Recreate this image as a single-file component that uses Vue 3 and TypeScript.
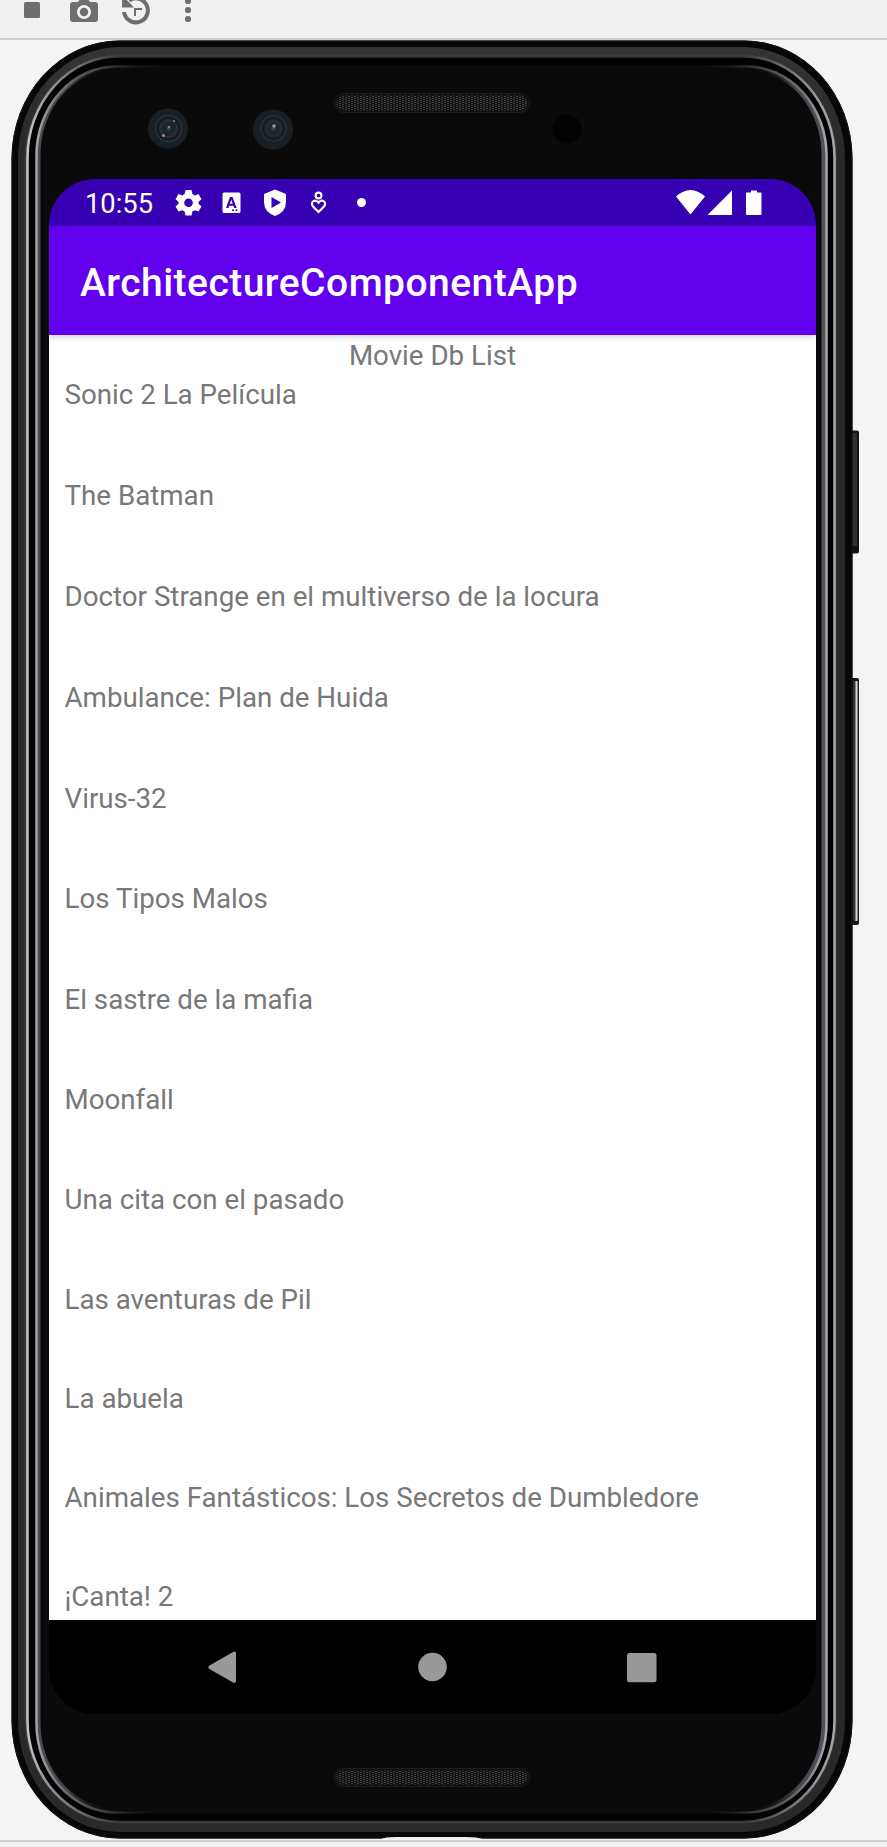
<script setup lang="ts">
interface Movie {
  title: string
  height: number
}

const movies: Movie[] = [
  { title: 'Sonic 2 La Película', height: 101.2 },
  { title: 'The Batman', height: 101.4 },
  { title: 'Doctor Strange en el multiverso de la locura', height: 101.1 },
  { title: 'Ambulance: Plan de Huida', height: 100.7 },
  { title: 'Virus-32', height: 100.6 },
  { title: 'Los Tipos Malos', height: 100.2 },
  { title: 'El sastre de la mafia', height: 100.2 },
  { title: 'Moonfall', height: 99.9 },
  { title: 'Una cita con el pasado', height: 99.8 },
  { title: 'Las aventuras de Pil', height: 99.4 },
  { title: 'La abuela', height: 99.2 },
  { title: 'Animales Fantásticos: Los Secretos de Dumbledore', height: 99 },
  { title: '¡Canta! 2', height: 40 },
]
</script>

<template>
  <div class="window">
    <header class="toolbar">
      <svg width="220" height="38" viewBox="0 0 220 38" fill="#6e6e6e">
        <rect x="24" y="2" width="16" height="16" rx="1.5" />
        <path fill-rule="evenodd" d="M73 2h5l3-4h6l3 4h5q3 0 3 3v14q0 3-3 3H73q-3 0-3-3V5q0-3 3-3zM84 5a7 7 0 1 0 0 14a7 7 0 1 0 0-14z" />
        <circle cx="84" cy="12" r="4.2" />
        <path d="M124 12A12 12 0 1 0 129 .5" fill="none" stroke="#6e6e6e" stroke-width="4" />
        <path d="M122-5l12 12.500H122zM134 8h8v2h-6v6h-2z" />
        <circle cx="188" cy="1" r="3.100" /><circle cx="188" cy="10" r="3.100" /><circle cx="188" cy="19" r="3.100" />
      </svg>
    </header>

    <main class="stage">
      <svg class="shell" width="887" height="1807" viewBox="0 40 887 1807">
        <defs>
          <linearGradient id="band" x1="0" y1="0" x2="0" y2="1">
            <stop offset="0" stop-color="#343434" /><stop offset=".06" stop-color="#292929" /><stop offset="1" stop-color="#292929" />
          </linearGradient>
          <linearGradient id="rim" gradientUnits="userSpaceOnUse" x1="26" y1="0" x2="838" y2="0">
            <stop offset="0" stop-color="#c8c8c8" /><stop offset=".025" stop-color="#999" /><stop offset=".11" stop-color="#3c3c3c" />
            <stop offset=".89" stop-color="#3c3c3c" /><stop offset=".975" stop-color="#999" /><stop offset="1" stop-color="#aaa" />
          </linearGradient>
          <linearGradient id="glint" gradientUnits="userSpaceOnUse" x1="35" y1="0" x2="829" y2="0">
            <stop offset="0" stop-color="#a4a4a8" /><stop offset=".03" stop-color="#75757a" /><stop offset=".09" stop-color="#3a3940" /><stop offset=".17" stop-color="#09090a" stop-opacity="0" />
            <stop offset=".83" stop-color="#09090a" stop-opacity="0" /><stop offset=".91" stop-color="#3a3940" /><stop offset=".97" stop-color="#75757a" /><stop offset="1" stop-color="#b0b0b3" />
          </linearGradient>
          <linearGradient id="haze" gradientUnits="userSpaceOnUse" x1="35" y1="0" x2="829" y2="0">
            <stop offset="0" stop-color="#4b4a53" /><stop offset=".04" stop-color="#45444c" /><stop offset=".1" stop-color="#09090a" stop-opacity="0" />
            <stop offset=".9" stop-color="#09090a" stop-opacity="0" /><stop offset=".96" stop-color="#45444c" /><stop offset="1" stop-color="#55545c" />
          </linearGradient>
          <radialGradient id="lens">
            <stop offset="0" stop-color="#3c4b5e" /><stop offset=".25" stop-color="#17242d" /><stop offset=".6" stop-color="#242629" /><stop offset=".85" stop-color="#15181a" /><stop offset="1" stop-color="#3a3c3f" />
          </radialGradient>
          <pattern id="mesh" width="6" height="4" patternUnits="userSpaceOnUse">
            <rect width="6" height="4" fill="#121212" /><path d="M0 0h2v1H0zM3 1h2v1H3zM0 2h2v1H0zM3 3h2v1H3z" fill="#414141" />
          </pattern>
          <linearGradient id="key" x1="0" y1="0" x2="1" y2="0">
            <stop offset="0" stop-color="#111" /><stop offset=".5" stop-color="#393735" /><stop offset=".72" stop-color="#e4dfdc" /><stop offset="1" stop-color="#302d2b" />
          </linearGradient>
        </defs>

        <rect x="850" y="430.500" width="9" height="123" rx="2" fill="#121212" />
        <rect x="852" y="433" width="5" height="113" fill="#303030" />
        <rect x="850" y="678" width="9" height="247" rx="2" fill="#171615" />
        <rect x="851" y="681" width="7.500" height="240" rx="2" fill="url(#key)" />

        <rect x="11.500" y="40.500" width="841" height="1798" rx="108" ry="118" fill="#070707" />
        <rect x="12" y="41" width="840" height="1797" rx="108" ry="118" fill="none" stroke="#161616" />
        <rect x="18" y="47" width="827" height="1785" rx="102" ry="112" fill="url(#band)" />
        <rect x="24.500" y="55.500" width="812.500" height="1767" rx="95" ry="104" fill="#3a3a3a" />
        <rect x="27" y="57.500" width="807.500" height="1764" rx="92" ry="102" fill="#030303" />
        <rect x="27.500" y="56" width="807" height="1766" rx="92" ry="102" fill="none" stroke="url(#rim)" stroke-width="2.500" />
        <rect x="35" y="65" width="793" height="1748" rx="82" ry="90" fill="#0a0a0a" />
        <rect x="38.500" y="67.500" width="785" height="1743" rx="78" ry="87" fill="none" stroke="url(#haze)" stroke-width="4" />
        <rect x="36.500" y="66.500" width="790" height="1746" rx="80" ry="89" fill="none" stroke="url(#glint)" stroke-width="2.500" />
        <path d="M381 1839q4-2 15-2h70q12 0 16 2z" fill="#eee" />

        <g>
          <circle cx="168" cy="128.500" r="20" fill="#182026" /><circle cx="168.500" cy="128.500" r="13.500" fill="url(#lens)" />
          <circle cx="168.500" cy="128.500" r="8.500" fill="none" stroke="#34383b" />
          <circle cx="163.500" cy="135.500" r="1.500" fill="#a3938b" /><circle cx="174" cy="121" r="1" fill="#888" /><circle cx="169" cy="127" r="1" fill="#93a4bf" />
          <circle cx="273" cy="129.500" r="20" fill="#182026" /><circle cx="273.500" cy="128.500" r="13" fill="url(#lens)" />
          <circle cx="273.500" cy="128.500" r="7.500" fill="none" stroke="#2d3134" />
          <circle cx="274" cy="126" r="1.800" fill="#9597a3" />
          <circle cx="567" cy="129" r="14.500" fill="#020103" />
        </g>
        <rect x="334.500" y="93.500" width="195" height="19" rx="9.500" fill="#0f0f0f" stroke="#1d1d1d" />
        <rect x="336.500" y="95.500" width="191" height="15" rx="7.500" fill="url(#mesh)" />
        <rect x="334.500" y="1768.500" width="195" height="18" rx="9" fill="#0f0f0f" stroke="#1d1d1d" />
        <rect x="336.500" y="1770.500" width="191" height="14" rx="7" fill="url(#mesh)" />
      </svg>

      <section class="screen">
        <div class="status">
          <span class="clock">10:55</span>
          <svg class="notices" width="200" height="47" viewBox="0 0 200 47" fill="#fff">
            <path fill-rule="evenodd" d="M10.500 11h6l.9 4 2.400 1.400 3.700-1.400 3 5.200-3 2.600v2l3 2.600-3 5.200-3.700-1.400-2.400 1.400-.9 3.900h-6l-.9-3.900-2.400-1.400-3.700 1.400-3-5.200 3-2.600v-2l-3-2.600 3-5.200L7.200 16.400 9.600 15zM13.500 19.500a4.300 4.300 0 1 0 0 8.600a4.300 4.300 0 1 0 0-8.600z" />
            <path fill-rule="evenodd" d="M49 13.500h15q1.500 0 1.500 1.500v17.500q0 1.500-1.500 1.500H49q-1.500 0-1.500-1.500V15q0-1.500 1.500-1.500zM55 18l-4 11h2.500l.7-2.300h4.200l.8 2.300h2.500l-4.200-11zM56.300 20.700l1.400 4h-2.900zM57 30.500v1.500h2v-1.500zM60.500 30.500v1.500h2v-1.500z" />
            <path fill-rule="evenodd" d="M100 10.500l11 4.500v8q0 10-11 14q-11-4-11-14v-8zM96.500 18v11l9.500-5.500z" />
            <g fill="none" stroke="#fff" stroke-width="2.100"><circle cx="143.500" cy="16.500" r="2.900" /><path d="M143.500 33l-5.500-5.500c-3.500-4.200 2.300-8.500 5.500-3.800c3.200-4.700 9-.4 5.500 3.800z" /></g>
            <circle cx="186.500" cy="23.500" r="4.500" />
          </svg>
          <svg class="signals" width="90" height="47" viewBox="0 0 90 47" fill="#fff">
            <path d="M0 17.500q14.500-13 29 0L14.500 35.500zM31.500 36L56 11.500V36zM70 14.500q0-1 1-1h4v-2h6v2h3.500q1 0 1 1V35q0 1-1 1H71q-1 0-1-1z" />
          </svg>
        </div>
        <div class="appbar"><h1>ArchitectureComponentApp</h1></div>
        <div class="content">
          <p class="heading">Movie Db List</p>
          <ul class="list">
            <li v-for="movie in movies" :key="movie.title" :style="{ height: movie.height + 'px' }">{{ movie.title }}</li>
          </ul>
        </div>
        <nav class="nav">
          <svg width="767" height="94" viewBox="0 0 767 94" fill="#999">
            <path d="M160.500 45.500L184 32q3-1.500 3 1.500v27q0 3.500-3 2L160.500 49q-2.500-1.700 0-3.500z" />
            <circle cx="383.500" cy="47" r="14.300" />
            <rect x="578" y="33" width="29.500" height="29.300" rx="2.500" />
          </svg>
        </nav>
      </section>
    </main>
    <footer class="footer"></footer>
  </div>
</template>

<style>
body { margin: 0; }
</style>

<style scoped>
.window { width: 887px; height: 1847px; overflow: hidden; display: flex; flex-direction: column; background: #f4f4f4; font-family: Roboto, "Liberation Sans", sans-serif; }
.toolbar { box-sizing: border-box; height: 40px; flex: none; background: #f1f1f1; border-bottom: 2px solid #cecece; }
.toolbar svg { display: block; }
.stage { position: relative; height: 1800px; flex: none; box-sizing: border-box; padding: 139px 0 0 49px; }
.shell { position: absolute; left: 0; top: 0; }
.screen { position: relative; width: 767px; height: 1535px; border-radius: 46px; overflow: hidden; display: flex; flex-direction: column; }
.status { height: 47px; flex: none; display: flex; align-items: center; background: #3700b3; color: #fff; z-index: 2; }
.clock { width: 90px; padding: 3px 0 0 36px; font-size: 27.300px; line-height: 44px; white-space: nowrap; }
.notices { flex: none; }
.signals { margin-left: 301px; flex: none; }
.appbar { height: 109px; flex: none; display: flex; align-items: center; padding-left: 31px; background: #6200ee; box-shadow: 0 1px 7px rgba(0, 0, 0, .25); z-index: 1; }
h1 { margin: 4px 0 0; color: #fff; font-size: 39px; font-weight: 500; line-height: 46px; letter-spacing: .47px; white-space: nowrap; }
.content { flex: 1; min-height: 0; overflow: hidden; background: #fff; color: #787878; font-size: 27.720px; line-height: 38px; }
.heading { margin: 2px 0 0; text-align: center; }
.list { margin: 0; padding: .5px 0 0 15.500px; list-style: none; }
.list li { white-space: nowrap; }
.nav { height: 94px; flex: none; background: #000; }
.nav svg { display: block; }
.footer { flex: 1; background: #f1f1f1; border-top: 2px solid #cecece; z-index: 1; }
</style>
